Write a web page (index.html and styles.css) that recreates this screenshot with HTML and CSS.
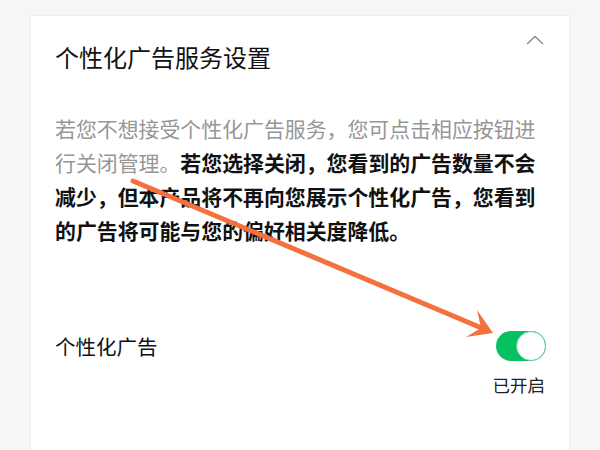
FILE: index.html
```html
<!DOCTYPE html>
<html lang="zh-CN">
<head>
<meta charset="utf-8">
<title>个性化广告服务设置</title>
<link rel="stylesheet" href="styles.css">
</head>
<body>
<div class="page">
  <div class="card">
    <div class="header">
      <h1 class="title">个性化广告服务设置</h1>
      <svg class="chevron" width="18" height="10" viewBox="0 0 18 10"><polyline points="1,9 9,1.5 17,9" fill="none" stroke="#8a8a8a" stroke-width="1.4"/></svg>
    </div>
    <p class="desc"><span class="muted">若您不想接受个性化广告服务，您可点击相应按钮进行关闭管理。</span><strong>若您选择关闭，您看到的广告数量不会减少，但本产品将不再向您展示个性化广告，您看到的广告将可能与您的偏好相关度降低。</strong></p>
    <div class="row">
      <span class="label">个性化广告</span>
      <span class="toggle"><span class="knob"></span></span>
    </div>
    <div class="status">已开启</div>
  </div>
  <svg class="arrow" width="600" height="450" viewBox="0 0 600 450">
    <line x1="133" y1="181" x2="484" y2="329" stroke="#f4703d" stroke-width="5" stroke-linecap="round"/>
    <polygon points="477,310 493,333 466,337 481,328" fill="#f4703d"/>
  </svg>
</div>
</body>
</html>
```

FILE: styles.css
```css
html, body {
  margin: 0;
  padding: 0;
}
body {
  background: #f6f6f8;
  font-family: "Noto Sans CJK SC", "Noto Sans", sans-serif;
  width: 600px;
  height: 450px;
  overflow: hidden;
}
.page {
  position: relative;
  width: 600px;
  height: 450px;
  padding-top: 15px;
  box-sizing: border-box;
  overflow: hidden;
}
.card {
  margin: 0 30px;
  background: #ffffff;
  border: 1px solid #eeeef0;
  border-bottom: none;
  padding: 25px 23px 0 24px;
  height: 435px;
  box-sizing: border-box;
}
.header {
  display: flex;
  justify-content: space-between;
  align-items: flex-start;
}
.title {
  margin: 0;
  font-size: 24px;
  font-weight: 400;
  line-height: 32px;
  color: #111111;
}
.chevron {
  margin-top: -6px;
  margin-right: 2px;
}
.desc {
  margin: 38px 0 0;
  width: 486px;
  font-size: 20.9px;
  line-height: 34px;
  color: #111111;
}
.muted {
  color: #969696;
}
.desc strong {
  font-weight: 700;
  color: #111111;
}
.row {
  margin-top: 84px;
  display: flex;
  justify-content: space-between;
  align-items: center;
  height: 30px;
}
.label {
  font-size: 20.5px;
  line-height: 30px;
  color: #111111;
}
.toggle {
  width: 50px;
  height: 30px;
  border-radius: 15px;
  background: #07c160;
  position: relative;
  box-sizing: border-box;
}
.knob {
  position: absolute;
  right: 0;
  top: 0;
  width: 30px;
  height: 30px;
  border-radius: 50%;
  background: #ffffff;
  border: 1.5px solid #5fcf9a;
  box-sizing: border-box;
}
.status {
  margin-top: 12px;
  text-align: right;
  padding-right: 1px;
  font-size: 17.5px;
  line-height: 24px;
  color: #222222;
}
.arrow {
  position: absolute;
  left: 0;
  top: 0;
  pointer-events: none;
}
```
